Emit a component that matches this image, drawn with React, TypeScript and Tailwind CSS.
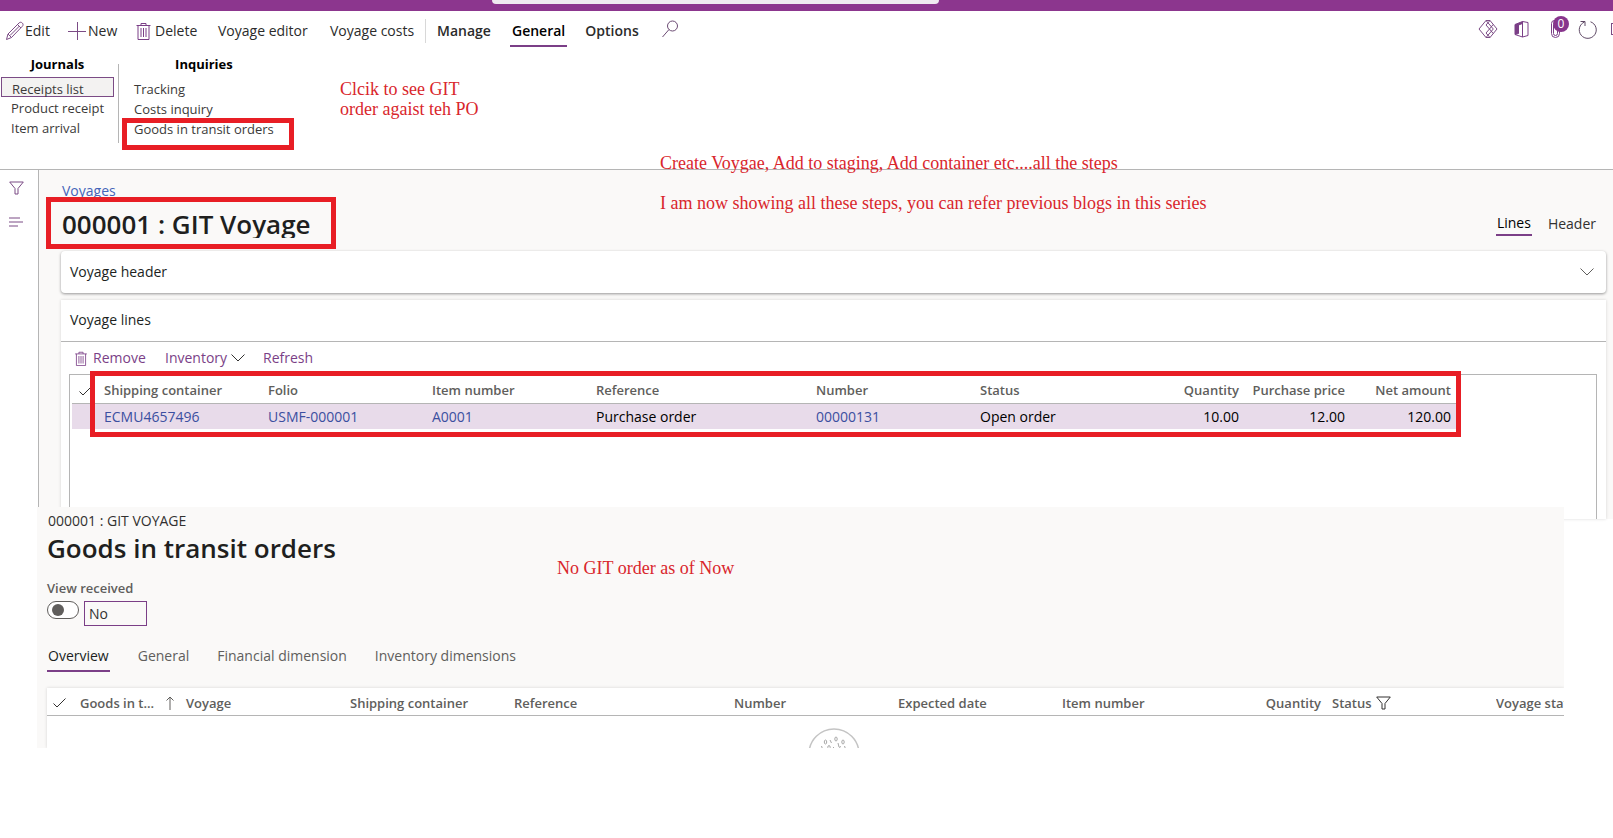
import React from 'react';

const lineColumns = [
  { label: 'Shipping container', width: 'w-[164px]' },
  { label: 'Folio', width: 'w-[164px]' },
  { label: 'Item number', width: 'w-[164px]' },
  { label: 'Reference', width: 'w-[220px]' },
  { label: 'Number', width: 'w-[164px]' },
  { label: 'Status', width: 'w-[164px]' },
  { label: 'Quantity', width: 'w-[95px]', right: true },
  { label: 'Purchase price', width: 'w-[106px]', right: true },
  { label: 'Net amount', width: 'w-[106px]', right: true },
];

const lineRow = [
  { value: 'ECMU4657496', link: true },
  { value: 'USMF-000001', link: true },
  { value: 'A0001', link: true },
  { value: 'Purchase order' },
  { value: '00000131', link: true },
  { value: 'Open order' },
  { value: '10.00', right: true },
  { value: '12.00', right: true },
  { value: '120.00', right: true },
];

const PencilIcon = () => (
  <svg className="h-5 w-5" viewBox="0 0 20 20" fill="none" stroke="#7b4b85">
    <path d="M1.500 18.500 3 13 14 2c1-1 2.300-1 3.300 0s1 2.300 0 3.300L6.500 16.500zM12.500 3.500l3.500 3.500M3 13l3.500 3.500M14.500 5 5 14.500" />
  </svg>
);

const PlusIcon = () => (
  <svg className="h-5 w-5" viewBox="0 0 20 20" fill="none" stroke="#7b4b85">
    <path d="M10.500 1v18M1 10.500h18" />
  </svg>
);

const TrashIcon = ({ className }: { className: string }) => (
  <svg className={className} viewBox="0 0 14 18" fill="none" stroke="#7b3f87">
    <path d="M0 3.500h14M4.500 3.500v-2h5v2M1.500 3.500v14h11v-14M4.500 6v9M7 6v9M9.500 6v9" />
  </svg>
);

const SearchIcon = () => (
  <svg className="h-[18px] w-4" viewBox="0 0 16 18" fill="none" stroke="#6b4a73">
    <circle cx="10.500" cy="6" r="5" />
    <path d="M7 9.500 .5 17" />
  </svg>
);

const DiamondIcon = () => (
  <svg className="h-5 w-5" viewBox="0 0 20 20" fill="none" stroke="#7b4b85">
    <path d="M12 1.500H8L1 10l7 8.500h4L19 10zM8 1.500 15.300 10 8 18.500M12 1.500 8 6l3.500 4L8 14l4 4.500M11.500 10l3.700-4.500M11.500 10l3.700 4.500" />
  </svg>
);

const OfficeIcon = () => (
  <svg className="h-[18px] w-[15px]" viewBox="0 0 15 18" fill="none" stroke="#7b3f87">
    <path d="M1 4.500 8.500 1.500v2L4.500 5v8.500L1 14.500z" fill="#7b3f87" />
    <path d="M8.500 1.500 14 2.500v13l-5.500 1.500zM1 14.500 8.500 17" />
  </svg>
);

const ClipIcon = () => (
  <svg className="h-[18px] w-[9px]" viewBox="0 0 9 18" fill="none" stroke="#7b3f87">
    <path d="M8.500 4v9.500a4 4 0 0 1-8 0V3.500a3 3 0 0 1 6 0v10a2 2 0 0 1-4 0V5" />
  </svg>
);

const RefreshIcon = () => (
  <svg className="h-[19px] w-[19px]" viewBox="0 0 19 19" fill="none" stroke="#5f4a66">
    <path d="M12.500 1.800A8.500 8.500 0 1 1 6.500 2M2.500 1.500h4.500v4.500" />
  </svg>
);

const FunnelIcon = ({ color }: { color: string }) => (
  <svg className="h-[14px] w-[15px]" viewBox="0 0 15 14" fill="none" stroke={color}>
    <path d="M.7 1h13.600L9 7.500v5.500H6V7.500z" />
  </svg>
);

const CheckIcon = () => (
  <svg className="h-[10px] w-[13px]" viewBox="0 0 13 10" fill="none" stroke="#323130">
    <path d="M.5 5.500 4 9l8.500-8.500" />
  </svg>
);

const ChevronIcon = ({ color }: { color: string }) => (
  <svg className="h-2 w-[14px]" viewBox="0 0 14 8" fill="none" stroke={color}>
    <path d="M.5.5 7 7l6.500-6.500" />
  </svg>
);

const Toolbar = () => (
  <header className="flex h-[45px] items-start overflow-hidden pl-[5px] pt-2 text-[#2b2b2b]">
    <nav className="flex h-6 flex-1 items-center text-sm leading-6">
      <button className="flex w-[62px] items-center"><PencilIcon />Edit</button>
      <button className="flex w-[69px] items-center gap-px"><PlusIcon />New</button>
      <button className="flex w-[82px] items-center gap-1"><TrashIcon className="h-[18px] w-[15px]" />Delete</button>
      <button className="w-[112px] text-left">Voyage editor</button>
      <button className="w-[95px] whitespace-nowrap text-left">Voyage costs</button>
      <span className="h-6 w-px bg-[#d8d8d8]" />
      <button className="ml-[11px] w-[73px] text-left font-semibold">Manage</button>
      <button className="relative mr-[18px] px-0.5 font-semibold text-black">
        General
        <span className="absolute -bottom-1 left-0 h-0.5 w-full bg-[#7b3f87]" />
      </button>
      <button className="w-[77px] text-left font-semibold">Options</button>
      <button aria-label="Search" className="pb-1"><SearchIcon /></button>
    </nav>
    <div className="flex h-5 items-center">
      <button aria-label="Power Apps" className="w-9"><DiamondIcon /></button>
      <button aria-label="Office" className="w-[37px]"><OfficeIcon /></button>
      <button aria-label="Attachments" className="relative w-[27px]">
        <ClipIcon />
        <span className="absolute -top-1 left-0.5 h-4 w-4 rounded-full bg-[#87358c] text-center text-xs leading-4 text-white">0</span>
      </button>
      <button aria-label="Refresh" className="w-[33px]"><RefreshIcon /></button>
      <button aria-label="Open in new window" className="-mr-3 h-3 w-[14px] border border-[#7b4b85]" />
    </div>
  </header>
);

const Ribbon = () => (
  <section className="flex h-[114px] border-b border-[#b5b5b5] text-[13px] leading-5 text-[#3b3a39]">
    <div className="flex w-[118px] flex-col px-px pr-1">
      <h2 className="h-[21px] text-center text-[13px] font-bold leading-4 text-black">Journals</h2>
      <button className="h-5 border border-[#7b4b85] bg-[#f3f2f1] pl-2.5 pt-px text-left leading-5">Receipts list</button>
      <button className="h-[21px] whitespace-nowrap pl-2.5 text-left">Product receipt</button>
      <button className="h-5 pl-2.5 text-left">Item arrival</button>
    </div>
    <div className="mt-2 h-[79px] w-px bg-[#b5b5b5]" />
    <div className="flex flex-col pl-[15px]">
      <h2 className="h-[23px] text-center text-[13px] font-bold leading-4 text-black">Inquiries</h2>
      <button className="h-5 text-left">Tracking</button>
      <button className="h-5 text-left">Costs inquiry</button>
      <div className="relative h-5">
        <button className="text-left">Goods in transit orders</button>
        <span className="absolute -left-3 -top-px h-8 w-[172px] border-[5px] border-[#e81e25]" />
      </div>
    </div>
  </section>
);

const VoyageLinesTable = () => (
  <table className="w-full table-fixed border-collapse text-sm">
    <thead>
      <tr className="h-7 text-left text-[13px] text-[#605e5c]">
        <th className="w-[33px] border-b border-[#b5b5b5] pl-2 pt-1" aria-label="Select"><CheckIcon /></th>
        {lineColumns.map((c) => (
          <th key={c.label} className={`${c.width} whitespace-nowrap border-b border-[#b5b5b5] pt-1 font-semibold ${c.right ? 'text-right' : ''}`}>{c.label}</th>
        ))}
        <th className="w-2 border-b border-[#b5b5b5]" />
        <th />
      </tr>
    </thead>
    <tbody>
      <tr className="h-[26px] text-black">
        <td className="border-l-2 border-white bg-[#e8dbea]" />
        {lineRow.map((c) => (
          <td key={c.value} className={`bg-[#e8dbea] pt-0.5 ${c.right ? 'text-right' : ''}`}>
            {c.link ? <a href="#" className="text-[#3b4fa0]">{c.value}</a> : c.value}
          </td>
        ))}
        <td className="bg-[#e8dbea]" />
        <td />
      </tr>
    </tbody>
  </table>
);

const VoyagePage = () => (
  <section className="flex">
    <aside className="flex w-[38px] flex-col gap-[22px] pl-[9px] pt-[11px]">
      <button aria-label="Show filters"><FunnelIcon color="#7b4b85" /></button>
      <button aria-label="Show list">
        <svg className="h-[10px] w-[14px]" viewBox="0 0 14 10" stroke="#7b4b85">
          <path d="M0 1h11M0 5h14M0 9h9" />
        </svg>
      </button>
    </aside>
    <div className="min-w-0 flex-1 border-l border-[#b5b5b5] bg-[#faf9f8] pl-[22px] pr-[7px] pt-[11px]">
      <a href="#" className="ml-px block h-5 text-sm leading-5 text-[#4464b8]">Voyages</a>
      <div className="flex h-[50px] justify-between">
        <div className="relative pl-px pt-[5px]">
          <h1 className="h-8 overflow-hidden whitespace-nowrap text-[26px] font-semibold leading-9 text-[#201f1e]">000001 : GIT Voyage</h1>
          <span className="absolute -left-[15px] -top-1 h-[52px] w-[290px] border-[5px] border-[#e81e25]" />
        </div>
        <div className="flex items-start gap-4 pr-2.5 pt-[11px] text-sm leading-6">
          <button className="h-6 border-b-2 border-[#7b3f87] px-px font-medium leading-5">Lines</button>
          <button className="h-6 leading-5 text-[#323130]">Header</button>
        </div>
      </div>
      <button className="flex h-[42px] w-full items-center justify-between rounded-sm bg-white pl-[9px] pr-3 text-sm font-medium text-[#201f1e] shadow-[0_1px_3px_rgba(0,0,0,0.4)]">
        Voyage header
        <ChevronIcon color="#605e5c" />
      </button>
      <div className="mt-[7px] bg-white shadow-[0_0_3px_rgba(0,0,0,0.15)]">
        <h2 className="h-[42px] border-b border-[#b5b5b5] pl-[9px] text-sm font-medium leading-10 text-[#201f1e]">Voyage lines</h2>
        <div className="flex h-8 items-center pl-[14px] text-sm text-[#7b3f87]">
          <button className="flex w-[90px] items-center gap-1.5"><TrashIcon className="h-[15px] w-3" />Remove</button>
          <button className="flex w-[98px] items-center gap-1">Inventory<ChevronIcon color="#323130" /></button>
          <button>Refresh</button>
        </div>
        <div className="relative ml-2 mr-[9px] h-[145px] border border-b-0 border-[#b5b5b5]">
          <VoyageLinesTable />
          <span className="absolute -top-1 left-5 h-[66px] w-[1371px] border-[5px] border-[#e81e25]" />
        </div>
      </div>
    </div>
  </section>
);

const GoodsInTransit = () => (
  <section className="relative -mt-3 ml-[37px] mr-[49px] overflow-hidden bg-[#faf9f8] pl-2.5 pt-1">
    <p className="pl-px text-sm leading-5 text-[#323130]">000001 : GIT VOYAGE</p>
    <h1 className="-mt-px text-[26px] font-semibold leading-9 text-[#201f1e]">Goods in transit orders</h1>
    <label htmlFor="view-received" className="mt-3 block text-[13px] font-semibold leading-5 text-[#605e5c]">View received</label>
    <div className="mt-[3px] flex items-start gap-[5px]">
      <input
        id="view-received"
        type="checkbox"
        role="switch"
        className="h-[18px] w-8 appearance-none rounded-full border border-[#605e5c] bg-white before:ml-1 before:mt-0.5 before:block before:h-3 before:w-3 before:rounded-full before:bg-[#605e5c]"
      />
      <input aria-label="View received value" readOnly value="No" className="h-[25px] w-[63px] border border-[#7b3f87] bg-[#faf9f8] px-1 text-sm text-[#323130]" />
    </div>
    <nav className="mt-4 flex gap-7 text-sm leading-7 text-[#605e5c]">
      <button className="border-b-2 border-[#7b3f87] px-px font-medium text-[#201f1e]">Overview</button>
      <button className="h-7">General</button>
      <button className="h-7">Financial dimension</button>
      <button className="h-7">Inventory dimensions</button>
    </nav>
    <div className="mt-4 h-[60px] overflow-hidden bg-white shadow-[0_0_3px_rgba(0,0,0,0.15)]">
      <table className="w-full table-fixed border-collapse">
        <thead>
          <tr className="h-[27px] whitespace-nowrap border-b border-[#b5b5b5] text-left text-[13px] text-[#605e5c] *:pt-1">
            <th className="w-[33px] pl-1.5" aria-label="Select"><CheckIcon /></th>
            <th className="w-[106px] font-semibold">
              <div className="flex items-center justify-between pr-3">
                Goods in t...
                <svg className="h-[14px] w-2" viewBox="0 0 8 14" fill="none" stroke="#605e5c">
                  <path d="M4 14V1M.5 4.500 4 1l3.500 3.500" />
                </svg>
              </div>
            </th>
            <th className="w-[164px] font-semibold">Voyage</th>
            <th className="w-[164px] font-semibold">Shipping container</th>
            <th className="w-[220px] font-semibold">Reference</th>
            <th className="w-[164px] font-semibold">Number</th>
            <th className="w-[164px] font-semibold">Expected date</th>
            <th className="w-[164px] font-semibold">Item number</th>
            <th className="w-[95px] text-right font-semibold">Quantity</th>
            <th className="w-[175px] pl-[11px] font-semibold">
              <div className="flex items-center gap-1">Status<FunnelIcon color="#323130" /></div>
            </th>
            <th className="overflow-hidden font-semibold">Voyage status</th>
          </tr>
        </thead>
      </table>
      <div className="flex justify-center pl-14 pt-3">
        <svg className="h-[50px] w-[52px]" viewBox="0 0 52 50" fill="none" stroke="#c4c4c4">
          <circle cx="26" cy="26" r="25" strokeWidth="1.500" />
          <g stroke="#a8a8a8">
            <ellipse cx="17.500" cy="14" rx="1.200" ry="2" />
            <ellipse cx="28" cy="11" rx="1.200" ry="2" />
            <ellipse cx="35" cy="14" rx="1.200" ry="2" />
            <ellipse cx="21" cy="19.500" rx="1.200" ry="2" />
            <path d="m22 12 1.500 3M30 15l1 4M13.500 18l1 3M25 20l1-1M31.500 20l1-2M36.500 18l1 3" />
          </g>
        </svg>
      </div>
    </div>
  </section>
);

// Red notes written over the screens
const Notes = () => (
  <div className="pointer-events-none whitespace-nowrap font-['Liberation_Serif',serif] text-lg leading-5 text-[#d9262c]">
    <p className="absolute left-[340px] top-[79px]">Clcik to see GIT<br />order agaist teh PO</p>
    <p className="absolute left-[660px] top-[153px]">Create Voygae, Add to staging, Add container etc....all the steps</p>
    <p className="absolute left-[660px] top-[193px]">I am now showing all these steps, you can refer previous blogs in this series</p>
    <p className="absolute left-[557px] top-[558px]">No GIT order as of Now</p>
  </div>
);

export default function App() {
  return (
    <div className="relative overflow-hidden bg-white font-['Open_Sans','Noto_Sans',sans-serif]">
      <div className="h-[11px] bg-[#8c368e]">
        <div className="ml-[492px] h-1 w-[447px] rounded-b-sm bg-[#efeaf0]" />
      </div>
      <Toolbar />
      <Ribbon />
      <VoyagePage />
      <GoodsInTransit />
      <Notes />
    </div>
  );
}
